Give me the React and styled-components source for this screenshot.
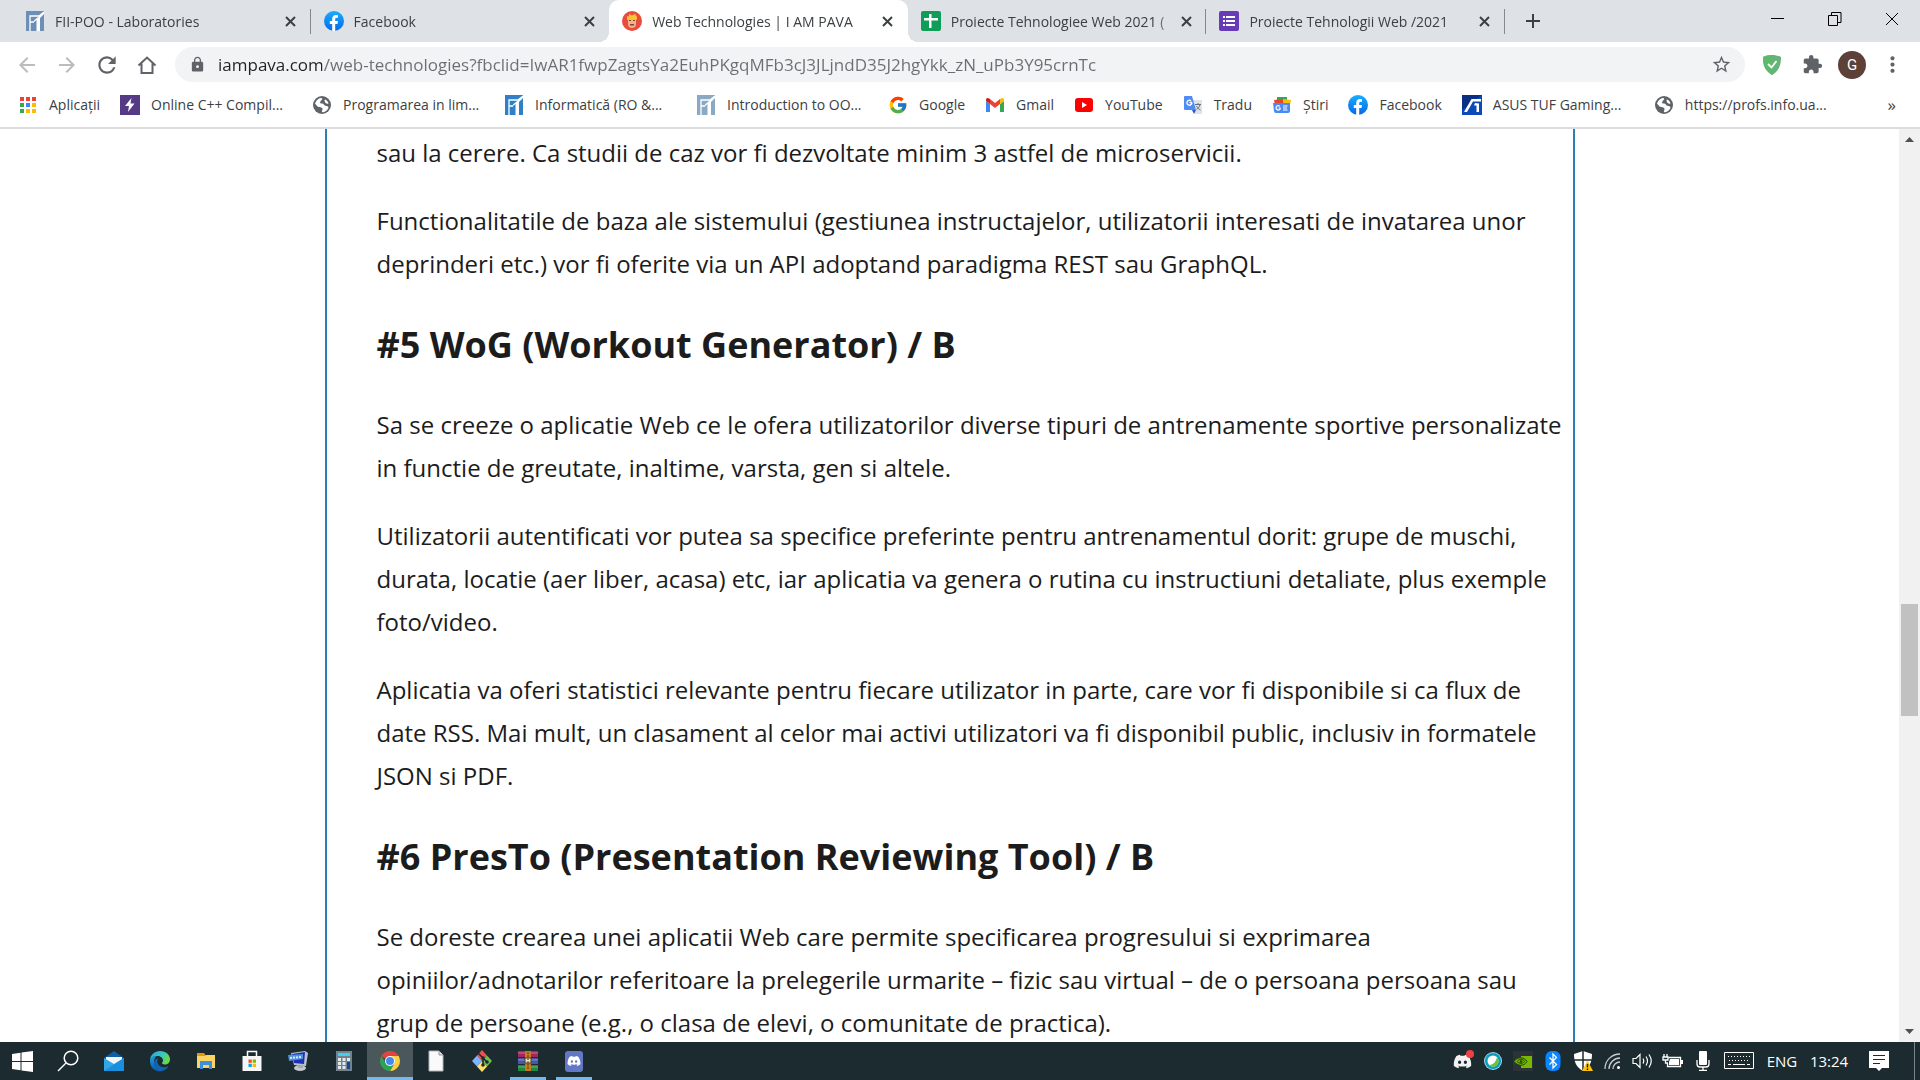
import React from "react";
import styled, { createGlobalStyle } from "styled-components";
import { MdArrowBack, MdArrowForward, MdRefresh, MdLock, MdStarBorder, MdExtension, MdMoreVert, MdAdd } from "react-icons/md";
import { FaDiscord } from "react-icons/fa";
import { FcGoogle } from "react-icons/fc";

const GlobalStyle = createGlobalStyle`
  *, *::before, *::after { box-sizing: border-box; }
  body { margin: 0; background: #fff; font-family: "Open Sans", "Noto Sans", sans-serif; }
  button { border: 0; padding: 0; background: none; font: inherit; color: inherit; }
  a { color: inherit; text-decoration: none; }
  svg { display: block; flex: none; }
`;

/* ---------- layout ---------- */

const Screen = styled.div`
  display: flex;
  flex-direction: column;
  height: 100vh;
  overflow: hidden;
`;

const TabStrip = styled.header`
  display: flex;
  flex: none;
  height: 42px;
  padding-left: 12px;
  background: #dee1e6;
  color: #3c4043;
`;

const Tabs = styled.div`
  display: flex;
  flex: 0 1 1493px;
  min-width: 0;
`;

const TabItem = styled.div`
  position: relative;
  display: flex;
  flex: 1 1 0;
  align-items: center;
  min-width: 0;
  padding: 0 10px 0 13px;
  border-radius: 10px 10px 0 0;
  background: ${(p) => (p.$active ? "#fff" : "transparent")};

  &::before {
    content: "";
    display: ${(p) => (p.$active ? "block" : "none")};
    position: absolute;
    bottom: 0;
    left: -10px;
    right: -10px;
    height: 10px;
    background:
      radial-gradient(circle at 0 0, transparent 10px, #fff 10px) left / 10px 10px no-repeat,
      radial-gradient(circle at 100% 0, transparent 10px, #fff 10px) right / 10px 10px no-repeat;
  }

  &::after {
    content: "";
    position: absolute;
    top: 9px;
    right: 0;
    width: 1px;
    height: 25px;
    background: ${(p) => (p.$divider ? "#85888c" : "transparent")};
  }
`;

const TabButton = styled.button`
  display: flex;
  flex: 1;
  align-items: center;
  gap: 10px;
  min-width: 0;
  height: 40px;
  font-size: 14px;
  text-align: left;
`;

const TabTitle = styled.span`
  flex: 1;
  overflow: hidden;
  white-space: nowrap;
  mask-image: linear-gradient(to left, transparent, #000 20px);
`;

const IconButton = styled.button`
  display: grid;
  place-items: center;
  flex: none;
  width: ${(p) => p.$w || 20}px;
  height: ${(p) => p.$h || 20}px;
  color: ${(p) => p.$color || "#3c4043"};
`;

const WindowControls = styled.div`
  display: flex;
  margin-left: auto;
`;

const Toolbar = styled.div`
  display: flex;
  flex: none;
  align-items: center;
  height: 45px;
  padding: 0 8px 0 7px;
`;

const AddressBar = styled.label`
  display: flex;
  flex: 1;
  align-items: center;
  gap: 12px;
  height: 35px;
  margin: 0 7px 0 8px;
  padding: 0 13px 0 14px;
  border-radius: 18px;
  background: #f1f3f4;
  color: #5f6368;
`;

const AddressInput = styled.input`
  flex: 1;
  min-width: 0;
  padding: 0;
  border: 0;
  outline: 0;
  font: 17px/24px "Open Sans", "Noto Sans", sans-serif;
  background: linear-gradient(to right, #202124 104px, #6a6e73 104px);
  background-clip: text;
  -webkit-text-fill-color: transparent;
`;

const Avatar = styled.span`
  display: grid;
  place-items: center;
  width: 28px;
  height: 28px;
  border-radius: 50%;
  background: #5d4037;
  color: #fff;
  font: 15px Roboto, sans-serif;
`;

const BookmarkBar = styled.nav`
  display: flex;
  flex: none;
  align-items: center;
  height: 42px;
  padding: 0 24px 5px 18px;
  border-bottom: 2px solid #dadce0;
  color: #3c4043;
  font-size: 14px;
`;

const Bookmark = styled.a`
  display: flex;
  flex: 0 0 ${(p) => (p.$wide ? "192px" : "auto")};
  align-items: center;
  gap: 11px;
  padding-right: 20px;
  white-space: nowrap;
`;

const MoreButton = styled.button`
  margin-left: auto;
  font-size: 17px;
  line-height: 20px;
`;

const Viewport = styled.div`
  display: flex;
  flex: 1;
  min-height: 0;
`;

const Main = styled.main`
  display: flex;
  flex: 1;
  justify-content: center;
  overflow: hidden;
`;

const Article = styled.article`
  flex: 0 1 1250px;
  padding: 2px 10px 0 50px;
  border: solid #2980b9;
  border-width: 0 2px;
  color: #1c1c1c;
`;

const Paragraph = styled.p`
  margin: 0 0 25px;
  font-size: 24px;
  line-height: 43px;
`;

const Heading = styled.h2`
  margin: 33px 0 31px;
  font-size: 36px;
  font-weight: 700;
  line-height: 54px;
`;

const ScrollBar = styled.div`
  display: grid;
  flex: none;
  grid-template-rows: 21px 454fr 112px 305fr 21px;
  justify-items: center;
  width: 21px;
  background: #f1f1f1;
`;

const Thumb = styled.div`
  grid-row: 3;
  width: 17px;
  background: #c1c1c1;
`;

const ScrollArrow = styled.button`
  display: grid;
  grid-row: ${(p) => p.$row};
  place-items: center;
  width: 21px;
`;

const Taskbar = styled.footer`
  display: flex;
  flex: none;
  height: 38px;
  background: #1b2b30;
  color: #fff;
`;

const TaskButton = styled.button`
  position: relative;
  display: grid;
  place-items: center;
  width: 46px;
  height: 38px;
  background: ${(p) => (p.$active ? "#4a575b" : "transparent")};

  &:first-child { width: 45px; }

  &::after {
    content: "";
    position: absolute;
    bottom: 0;
    left: ${(p) => (p.$active ? 0 : 5)}px;
    right: ${(p) => (p.$active ? 0 : 5)}px;
    height: 3px;
    background: ${(p) => (p.$open ? "#76b9ed" : "transparent")};
  }
`;

const Tray = styled.div`
  display: flex;
  align-items: center;
  margin-left: auto;
  font-size: 15px;
`;

const TrayButton = styled.button`
  display: grid;
  place-items: center;
  width: ${(p) => p.$w || 30}px;
  height: 38px;
`;

const ShowDesktop = styled.button`
  width: 6px;
  height: 38px;
  margin-left: 10px;
  border-left: 1px solid #7b8588;
`;

/* ---------- icons ---------- */

const Fii = ({ color }) => (
  <svg width="20" height="20" viewBox="0 0 20 20">
    <path d="M1 0h18v20H1z" fill={color} />
    <path d="M5 20V5h9l5-4M5 11h4" fill="none" stroke="#fff" strokeWidth="1.300" />
    <path d="M19 1v2l-4 4v13h-3.500V9L9 11V9.500z" fill="#fff" />
  </svg>
);

const FacebookLogo = () => (
  <svg width="20" height="20" viewBox="0 0 20 20">
    <defs><linearGradient id="fb" x2="0" y2="1"><stop stopColor="#19aefe" /><stop offset="1" stopColor="#0668e7" /></linearGradient></defs>
    <circle cx="10" cy="10" r="10" fill="url(#fb)" />
    <path d="M8.200 20v-7H5.800v-3h2.400V8c0-2.700 1.500-4 3.800-4l2 .2v2.500h-1.300c-1.200 0-1.500.7-1.500 1.500V10H14l-.5 3h-2.300v7z" fill="#fff" />
  </svg>
);

const Pava = () => (
  <svg width="20" height="20" viewBox="0 0 20 20">
    <circle cx="10" cy="10" r="10" fill="#e94b3c" />
    <path d="M6 7h8v6c0 3-2 4-4 4s-4-1-4-4z" fill="#f3b28b" />
    <path d="M5 9V5l2 .5V3l3 1.500L13 3l2 3v3l-2-1H7z" fill="#fbc531" />
    <path d="M7 9h2v1H7zm4 0h2v1h-2zM8 13h4v1.500H8z" fill="#7a4a3a" />
  </svg>
);

const Sheets = () => (
  <svg width="20" height="20" viewBox="0 0 20 20">
    <rect width="20" height="20" rx="2" fill="#0f9d58" />
    <path d="M8 3h2.500v4H17v2.500h-6.500V17H8V9.500H3V7h5z" fill="#fff" />
  </svg>
);

const Forms = () => (
  <svg width="20" height="20" viewBox="0 0 20 20">
    <rect width="20" height="20" rx="2" fill="#673ab7" />
    <path d="M4 5h2v2H4zm3 0h9v2H7zM4 9h2v2H4zm3 0h9v2H7zm-3 4h2v2H4zm3 0h9v2H7z" fill="#fff" />
  </svg>
);

const TabClose = () => (
  <svg width="11" height="11" viewBox="0 0 11 11"><path d="M1 1l9 9M10 1l-9 9" stroke="#3c4043" strokeWidth="2" /></svg>
);

const AppsGrid = () => (
  <svg width="20" height="20" viewBox="0 0 20 20">
    {["#ea4335", "#ea4335", "#ea4335", "#34a853", "#4285f4", "#fbbc04", "#34a853", "#fbbc04", "#fbbc04"].map((c, i) => (
      <rect key={i} x={2 + (i % 3) * 6} y={2 + Math.floor(i / 3) * 6} width="4" height="4" fill={c} />
    ))}
  </svg>
);

const Bolt = () => (
  <svg width="20" height="20" viewBox="0 0 20 20">
    <path d="M0 0h20v20H0z" fill="#553a86" />
    <path d="M11.500 3 5 11h4l-1 6 6.500-8.500H10.500z" fill="#fff" />
  </svg>
);

const Globe = () => (
  <svg width="20" height="20" viewBox="0 0 20 20">
    <circle cx="10" cy="10" r="9" fill="#5f6368" />
    <path d="M3 8.500C4 5 7 3 9.500 3c1.500.5.5 2-.5 2.500s0 1.500-1 2 1 1 2.500 1 1.500 2.500 3.500 2.500 3.500 1 1.500 3.500-4 3-5.500 2.500c-.5-1.500 1.500-2.500 0-4S6 12.500 5 11s-1.500-2-2-2.500z" fill="#fff" />
    <path d="M13 4.500c1.500.5 3 2 3.500 4-1.500.5-3 0-3.500-1.500-.3-1-1-1.500 0-2.500z" fill="#fff" />
  </svg>
);

const Gmail = () => (
  <svg width="20" height="20" viewBox="0 0 20 20">
    <path d="M1 17h4V9L1 6z" fill="#4285f4" />
    <path d="M15 17h4V6l-4 3z" fill="#34a853" />
    <path d="M1 6l4 3V4L3.500 3.200C2 2.500 1 3.500 1 5z" fill="#c5221f" />
    <path d="M5 4l5 4 5-4v5l-5 4-5-4z" fill="#ea4335" />
    <path d="M15 9l4-3V5c0-1.500-1-2.500-2.500-1.800L15 4z" fill="#fbbc04" />
  </svg>
);

const YouTube = () => (
  <svg width="20" height="20" viewBox="0 0 20 20">
    <rect x="1" y="3" width="18" height="14" rx="3" fill="#f00" />
    <path d="M8 7l5 3-5 3z" fill="#fff" />
  </svg>
);

const Translate = () => (
  <svg width="20" height="20" viewBox="0 0 20 20">
    <path d="M8 5h10a1 1 0 0 1 1 1v12a1 1 0 0 1-1 1h-6z" fill="#dfe2e6" />
    <path d="M1 2a1 1 0 0 1 1-1h7l4 14H2a1 1 0 0 1-1-1z" fill="#4f8df5" />
    <path d="M9 15h4l-2 4z" fill="#2a56c6" />
    <path d="M9 7.500H6.500M8.900 7.500A2.500 2.500 0 1 1 8 5.800" fill="none" stroke="#fff" strokeWidth="1.300" />
    <path d="M12 9.500h6M15 8v1.500M17 9.500c-.5 2.500-2 4-3.500 5M13.500 11c1 2 2 3 4 4" fill="none" stroke="#697078" />
  </svg>
);

const News = () => (
  <svg width="20" height="20" viewBox="0 0 20 20">
    <path d="M5 2h10v8H5z" fill="#34a853" />
    <path d="M2 5l9-1 1 6H3z" fill="#ea4335" />
    <path d="M11 4l8 1-1 5h-7z" fill="#fbbc04" />
    <path d="M1 8h17v8a2 2 0 0 1-2 2H4a2 2 0 0 1-2-2z" fill="#4a8af4" />
    <path d="M8.500 13H6.500M8.400 13A2.200 2.200 0 1 1 7.800 11.300M11 11h4.500M11 13h4M11 15h4.500" fill="none" stroke="#fff" strokeWidth="1.200" />
  </svg>
);

const Asus = () => (
  <svg width="20" height="20" viewBox="0 0 20 20">
    <path d="M0 0h20v20H0z" fill="#0b4ab8" /><path d="M0 0h20L0 15z" fill="#0a2f85" />
    <path d="M2 17 9.500 4H19v2.500h-8L5 17z" fill="#fff" /><path d="M13 8l4 .5V17h-2.500v-6.500H12z" fill="#fff" />
  </svg>
);

const Home = () => (
  <svg width="20" height="20" viewBox="0 0 20 20" fill="none" stroke="#5f6368" strokeWidth="2">
    <path d="M1.500 10.500 10 2.500l8.500 8M4.500 8.500v9.500h11V8.500" />
  </svg>
);

const AdGuard = () => (
  <svg width="22" height="22" viewBox="0 0 22 22">
    <path d="M11 1c3 0 7 .8 9 2 0 7-1 13-9 18C3 16 2 10 2 3c2-1.200 6-2 9-2z" fill="#67b279" />
    <path d="M11 1C8 1 4 1.800 2 3c0 7 1 13 9 18z" fill="#5bbb6a" />
    <path d="M7 10l3.500 3.500L15.500 7" fill="none" stroke="#fff" strokeWidth="1.800" />
  </svg>
);

const Minimize = () => <svg width="13" height="13"><path d="M0 6.500h13" stroke="#000" /></svg>;
const Restore = () => (
  <svg width="14" height="14" fill="none" stroke="#000"><path d="M.5 3.500h9v10h-9zM3.500 3V.5h9.500v10H10" /></svg>
);
const CloseWindow = () => <svg width="14" height="14"><path d="M1 1l12 12M13 1 1 13" stroke="#000" /></svg>;

const Windows = () => (
  <svg width="21" height="21" viewBox="0 0 21 21" fill="#fff">
    <path d="M0 3l8.500-1.200V10H0zM9.500 1.600 21 0v10H9.500zM0 11h8.500v8.200L0 18zM9.500 11H21v10L9.500 19.400z" />
  </svg>
);

const Search = () => (
  <svg width="22" height="22" viewBox="0 0 22 22" fill="none" stroke="#fff" strokeWidth="1.500">
    <circle cx="14" cy="8" r="6.800" /><path d="M9 13 1 21" />
  </svg>
);

const Mail = () => (
  <svg width="22" height="22" viewBox="0 0 22 22">
    <path d="M1 8 11 1l10 7v4H1z" fill="#0f5fa8" />
    <path d="M3 7h16v8H3z" fill="#f2f6fa" />
    <path d="M1 8l10 6 10-6v13H1z" fill="#31a7ea" />
    <path d="M1 21 21 8v13z" fill="#1a8fdd" />
  </svg>
);

const Edge = () => (
  <svg width="22" height="22" viewBox="0 0 22 22">
    <defs>
      <linearGradient id="eg" x2="1" y2=".4"><stop stopColor="#2aa5e5" /><stop offset=".6" stopColor="#35c6c0" /><stop offset="1" stopColor="#6bd84c" /></linearGradient>
      <linearGradient id="eb" x2="0" y2="1"><stop stopColor="#1b9de2" /><stop offset="1" stopColor="#0c59a4" /></linearGradient>
    </defs>
    <path d="M1 10C1.500 4.500 6 1 11 1c6 0 10 4 10 8.500 0 3-2.500 5-5 5-2 0-3-1-3-1.500 0-.6 1-1 1-2.500C14 8 11.500 6 8 6c-4 0-6 2.500-7 4z" fill="url(#eg)" />
    <path d="M1 10c1-2.500 4-4 7-4-2 1-3 3-3 6 0 5 4 9 9 9a10 10 0 0 1-3 .5C5 21.500.5 16.500 1 10z" fill="url(#eb)" />
    <path d="M9.500 8.500C8 10 8 12 9 14c1.500 3 6 4.500 10.500 2C18 19.500 14.500 21 12 21c-4 0-7-4-7-8 0-2.500 2-4.500 4.500-4.500z" fill="#1263b1" />
  </svg>
);

const Folder = () => (
  <svg width="20" height="20" viewBox="0 0 20 20">
    <path d="M1 2h7l1.500 2H19v4H1z" fill="#dd9a12" />
    <path d="M1 5h8l1.500-1H19v13H1z" fill="#fcd462" />
    <path d="M4 10h12v8h-3v-4H7v4H4z" fill="#3e8ede" />
  </svg>
);

const Store = () => (
  <svg width="22" height="22" viewBox="0 0 22 22">
    <path d="M6.500 6V1.500h9V6" fill="none" stroke="#fff" strokeWidth="1.500" />
    <path d="M1.500 6h19v15h-19z" fill="#f6f6f6" />
    <path d="M7.500 9.500h3.300v3.300H7.500z" fill="#f25022" /><path d="M11.700 9.500H15v3.300h-3.300z" fill="#7fba00" />
    <path d="M7.500 13.700h3.300V17H7.500z" fill="#00a4ef" /><path d="M11.700 13.700H15V17h-3.300z" fill="#ffb900" />
  </svg>
);

const RemotePc = () => (
  <svg width="22" height="22" viewBox="0 0 22 22">
    <path d="M4 3 18 1l3 2-2 13-12-1z" fill="#b9c1c9" />
    <path d="M5 4l13-2-1 12-10-1z" fill="#1c2fb5" />
    <path d="M1 5l15-1v5L2 11z" fill="#4d8fe0" /><path d="M3 8l11-1" stroke="#dce9ff" strokeWidth="2" strokeDasharray="2 1" />
    <ellipse cx="13" cy="18" rx="6" ry="3" fill="#c3c8cc" /><path d="M11 15h5v3h-5z" fill="#a2a9af" />
  </svg>
);

const Calculator = () => (
  <svg width="18" height="22" viewBox="0 0 18 22">
    <path d="M1 1h16v20H1z" fill="#74828d" /><path d="M3 3h12v3H3z" fill="#41d0f0" />
    <path d="M3 8h3v3H3zm4.500 0h3v3h-3zM12 8h3v3h-3zM3 12h3v3H3zm4.500 0h3v3h-3zM3 16h3v3H3zm4.500 0h3v3h-3z" fill="#e4e9ed" />
    <path d="M12 12h3v7h-3z" fill="#0b4d95" />
  </svg>
);

const Chrome = () => (
  <svg width="20" height="20" viewBox="0 0 20 20">
    <path d="M10 10 1.340 5A10 10 0 0 1 18.660 5z" fill="#e0443a" />
    <path d="M10 10V5h8.660A10 10 0 0 1 10 20l4.300-7.500z" fill="#fdd043" />
    <path d="M10 10l4.300 2.500L10 20A10 10 0 0 1 1.340 5l4.300 7.500z" fill="#2fa355" />
    <circle cx="10" cy="10" r="5" fill="#fff" /><circle cx="10" cy="10" r="4" fill="#4688f1" />
  </svg>
);

const Document = () => (
  <svg width="16" height="22" viewBox="0 0 16 22">
    <path d="M1 1h10l4 4v16H1z" fill="#fafafa" stroke="#b5b5b5" /><path d="M11 1v4h4" fill="#ddd" stroke="#999" />
  </svg>
);

const Git = () => (
  <svg width="22" height="22" viewBox="0 0 22 22">
    <path d="M11 0l5 5.500-5 5.500-5-5.500z" fill="#f0504a" /><path d="M6 5.500l5 5.500-5 5.500L1 11z" fill="#80b3ff" />
    <path d="M16 5.500l5 5.500-5 5.500-5-5.500z" fill="#70c04b" /><path d="M11 11l5 5.500-5 5.500-5-5.500z" fill="#ffe066" />
    <path d="M7 3l5 5v8M12 8l4 4" fill="none" stroke="#1b2b30" strokeWidth="1.600" />
    <circle cx="12" cy="8" r="1.800" fill="#1b2b30" /><circle cx="12" cy="15" r="1.800" fill="#1b2b30" /><circle cx="16" cy="12" r="1.800" fill="#1b2b30" />
  </svg>
);

const WinRar = () => (
  <svg width="22" height="22" viewBox="0 0 22 22">
    <path d="M1 1h20v6H1z" fill="#a9265b" /><path d="M1 8h20v6H1z" fill="#4457a8" /><path d="M1 15h20v6H1z" fill="#1f8a3f" />
    <path d="M1 3h20M1 10h20M1 17h20" stroke="#fff" strokeOpacity=".35" />
    <path d="M8 1h6v20H8z" fill="#c57a22" /><path d="M8 8h6v5H8z" fill="#e9e3d2" stroke="#5a3a10" />
    <path d="M11 2v18" stroke="#5a3a10" strokeDasharray="2 1" />
  </svg>
);

const DiscordTile = styled.span`
  display: grid;
  place-items: center;
  width: 18px;
  height: 21px;
  border-radius: 3px;
  background: #6278c4;
`;

const DiscordTray = () => (
  <svg width="22" height="22" viewBox="0 0 22 22">
    <FaDiscord x="1" y="2" size={19} color="#f2f2f2" /><circle cx="18" cy="4" r="4" fill="#ed4245" />
  </svg>
);

const Webex = () => (
  <svg width="20" height="20" viewBox="0 0 20 20">
    <circle cx="10" cy="10" r="9" fill="#9fd6e0" /><circle cx="10" cy="10" r="8" fill="#0c9dbd" />
    <circle cx="10" cy="10" r="5.500" fill="#fff" /><path d="M14 6a5.500 5.500 0 0 1-8 8c4 0 7-3 8-8z" fill="#70bf44" />
  </svg>
);

const Nvidia = () => (
  <svg width="20" height="20" viewBox="0 0 20 20">
    <path d="M0 0h20v20H0z" fill="#2c3338" /><path d="M8 5h11v12H8z" fill="#76b900" />
    <path d="M1 10.500c3-5 10-5 13 0-3 5-9 5-13 0z" fill="#76b900" stroke="#26420a" />
    <path d="M4 10.500c2-3 6-3 7.500 0-2 2.500-5 2.500-7.500 0z" fill="none" stroke="#26420a" /><circle cx="8" cy="10.500" r="1.300" fill="#26420a" />
  </svg>
);

const Bluetooth = () => (
  <svg width="16" height="20" viewBox="0 0 16 20">
    <rect x=".5" width="15" height="20" rx="6" fill="#0a84ff" />
    <path d="M4.500 6.500l7 7L8 17V3l3.500 3.500-7 7" fill="none" stroke="#fff" strokeWidth="1.300" />
  </svg>
);

const Defender = () => (
  <svg width="20" height="21" viewBox="0 0 20 21">
    <path d="M10 0l9 3c0 8-2 13-9 17C3 16 1 11 1 3z" fill="#fff" />
    <path d="M10 0v20M1 9h18" stroke="#1b2b30" strokeWidth="1.500" />
    <path d="M14.500 9.500 20 20H9z" fill="#ffc20e" /><path d="M14.500 13v3.500m0 1v1.500" stroke="#222" strokeWidth="1.400" />
  </svg>
);

const Wifi = () => (
  <svg width="18" height="18" viewBox="0 0 18 18" fill="none" stroke="#c6cbcd" strokeWidth="1.300">
    <path d="M1 17C1 8 8 2 16 2M5 17c0-6 5-11 11-11M9 17c0-4 3-7 7-7" /><circle cx="14.500" cy="15.500" r="1.500" fill="#fff" stroke="none" />
  </svg>
);

const Volume = () => (
  <svg width="22" height="18" viewBox="0 0 22 18" fill="none" stroke="#fff" strokeWidth="1.200">
    <path d="M1 6.500h3l4-4v13l-4-4H1zM11 6.500q1.500 2.500 0 5M14 4.500q3 4.500 0 9M17 2.500q4.500 6.500 0 13" />
  </svg>
);

const Battery = () => (
  <svg width="22" height="14" viewBox="0 0 22 14">
    <path d="M6.500 3.500h12v9h-13V9" fill="none" stroke="#fff" strokeWidth="1.300" /><path d="M8 5h9v6H7V8z" fill="#fff" /><path d="M19 6h2v4h-2z" fill="#fff" />
    <path d="M2 0v3M5 0v3M1 3h5v3H1zM3.500 6v3H6" stroke="#fff" fill="none" strokeWidth="1.300" />
  </svg>
);

const Microphone = () => (
  <svg width="14" height="20" viewBox="0 0 14 20">
    <rect x="3" width="8" height="14" rx="1" fill="#fff" /><path d="M1 9v4q0 3 3 3h6q3 0 3-3V9M7 16v3.300M3 19.300h8" fill="none" stroke="#fff" strokeWidth="1.300" />
  </svg>
);

const Keyboard = () => (
  <svg width="30" height="18" viewBox="0 0 30 18" fill="none" stroke="#fff">
    <path d="M.5.500h29v16H.5z" /><path d="M4 4.500h22M5 8.500h20" strokeDasharray="1 2" /><path d="M4 12.500h3M9 12.500h12M23 12.500h3" />
  </svg>
);

const Notifications = () => (
  <svg width="20" height="20" viewBox="0 0 20 20">
    <path d="M0 0h20v17h-7l-3 3-3-3H0z" fill="#fff" /><path d="M4 4.500h12M4 8.500h12M4 12.500h7" stroke="#1b2b30" strokeWidth="1.200" />
  </svg>
);

const Arrow = ({ down }) => (
  <svg width="9" height="5" viewBox="0 0 9 5"><path d={down ? "M0 0h9L4.500 5z" : "M0 5h9L4.500 0z"} fill="#505050" /></svg>
);

/* ---------- data ---------- */

const tabs = [
  { title: "FII-POO - Laboratories", icon: <Fii color="#6c8fb7" />, divider: true },
  { title: "Facebook", icon: <FacebookLogo /> },
  { title: "Web Technologies | I AM PAVA", icon: <Pava />, active: true },
  { title: "Proiecte Tehnologiee Web 2021 (", icon: <Sheets />, divider: true },
  { title: "Proiecte Tehnologii Web /2021", icon: <Forms />, divider: true },
];

const bookmarks = [
  { label: "Aplicații", icon: <AppsGrid /> },
  { label: "Online C++ Compil...", icon: <Bolt />, wide: true },
  { label: "Programarea in lim...", icon: <Globe />, wide: true },
  { label: "Informatică (RO &...", icon: <Fii color="#2f80c8" />, wide: true },
  { label: "Introduction to OO...", icon: <Fii color="#8ca9c4" />, wide: true },
  { label: "Google", icon: <FcGoogle size={20} /> },
  { label: "Gmail", icon: <Gmail /> },
  { label: "YouTube", icon: <YouTube /> },
  { label: "Tradu", icon: <Translate /> },
  { label: "Știri", icon: <News /> },
  { label: "Facebook", icon: <FacebookLogo /> },
  { label: "ASUS TUF Gaming...", icon: <Asus />, wide: true },
  { label: "https://profs.info.ua...", icon: <Globe />, wide: true },
];

const tasks = [
  { name: "Start", icon: <Windows /> },
  { name: "Search", icon: <Search /> },
  { name: "Mail", icon: <Mail /> },
  { name: "Edge", icon: <Edge /> },
  { name: "File Explorer", icon: <Folder /> },
  { name: "Store", icon: <Store /> },
  { name: "Remote PC", icon: <RemotePc /> },
  { name: "Calculator", icon: <Calculator /> },
  { name: "Chrome", icon: <Chrome />, active: true, open: true },
  { name: "Document", icon: <Document /> },
  { name: "Git", icon: <Git /> },
  { name: "WinRAR", icon: <WinRar />, open: true },
  { name: "Discord", icon: <DiscordTile><FaDiscord size={14} /></DiscordTile>, open: true },
];

const tray = [
  ["Discord", <DiscordTray />], ["Webex", <Webex />], ["NVIDIA", <Nvidia />], ["Bluetooth", <Bluetooth />],
  ["Security", <Defender />], ["Network", <Wifi />], ["Volume", <Volume />], ["Battery", <Battery />], ["Microphone", <Microphone />],
];

export default function App() {
  return (
    <Screen>
      <GlobalStyle />
      <TabStrip>
        <Tabs>
          {tabs.map((t) => (
            <TabItem key={t.title} $active={t.active} $divider={t.divider}>
              <TabButton>
                {t.icon}
                <TabTitle>{t.title}</TabTitle>
              </TabButton>
              <IconButton aria-label="Close tab"><TabClose /></IconButton>
            </TabItem>
          ))}
        </Tabs>
        <IconButton $w={55} $h={41} aria-label="New tab"><MdAdd size={24} /></IconButton>
        <WindowControls>
          <IconButton $w={57} $h={37} aria-label="Minimize"><Minimize /></IconButton>
          <IconButton $w={57} $h={37} aria-label="Restore"><Restore /></IconButton>
          <IconButton $w={57} $h={37} aria-label="Close"><CloseWindow /></IconButton>
        </WindowControls>
      </TabStrip>

      <Toolbar>
        <IconButton $w={40} $h={40} $color="#babcbe" aria-label="Back"><MdArrowBack size={24} /></IconButton>
        <IconButton $w={40} $h={40} $color="#babcbe" aria-label="Forward"><MdArrowForward size={24} /></IconButton>
        <IconButton $w={40} $h={40} $color="#5f6368" aria-label="Reload"><MdRefresh size={26} /></IconButton>
        <IconButton $w={40} $h={40} aria-label="Home"><Home /></IconButton>
        <AddressBar>
          <MdLock size={17} />
          <AddressInput
            aria-label="Address"
            spellCheck={false}
            defaultValue="iampava.com/web-technologies?fbclid=IwAR1fwpZagtsYa2EuhPKgqMFb3cJ3JLjndD35J2hgYkk_zN_uPb3Y95crnTc"
          />
          <MdStarBorder size={21} />
        </AddressBar>
        <IconButton $w={40} $h={40} aria-label="AdGuard"><AdGuard /></IconButton>
        <IconButton $w={40} $h={40} $color="#5f6368" aria-label="Extensions"><MdExtension size={21} /></IconButton>
        <IconButton $w={40} $h={40} aria-label="Profile"><Avatar>G</Avatar></IconButton>
        <IconButton $w={40} $h={40} $color="#5f6368" aria-label="Menu"><MdMoreVert size={25} /></IconButton>
      </Toolbar>

      <BookmarkBar>
        {bookmarks.map((b) => (
          <Bookmark key={b.label} href="#" $wide={b.wide}>
            {b.icon}
            {b.label}
          </Bookmark>
        ))}
        <MoreButton aria-label="More bookmarks">»</MoreButton>
      </BookmarkBar>

      <Viewport>
        <Main>
          <Article>
            <Paragraph>sau la cerere. Ca studii de caz vor fi dezvoltate minim 3 astfel de microservicii.</Paragraph>
            <Paragraph>
              Functionalitatile de baza ale sistemului (gestiunea instructajelor, utilizatorii interesati de invatarea unor
              deprinderi etc.) vor fi oferite via un API adoptand paradigma REST sau GraphQL.
            </Paragraph>
            <Heading>#5 WoG (Workout Generator) / B</Heading>
            <Paragraph>
              Sa se creeze o aplicatie Web ce le ofera utilizatorilor diverse tipuri de antrenamente sportive personalizate
              in functie de greutate, inaltime, varsta, gen si altele.
            </Paragraph>
            <Paragraph>
              Utilizatorii autentificati vor putea sa specifice preferinte pentru antrenamentul dorit: grupe de muschi,
              durata, locatie (aer liber, acasa) etc, iar aplicatia va genera o rutina cu instructiuni detaliate, plus
              exemple foto/video.
            </Paragraph>
            <Paragraph>
              Aplicatia va oferi statistici relevante pentru fiecare utilizator in parte, care vor fi disponibile si ca flux de
              date RSS. Mai mult, un clasament al celor mai activi utilizatori va fi disponibil public, inclusiv in formatele
              JSON si PDF.
            </Paragraph>
            <Heading>#6 PresTo (Presentation Reviewing Tool) / B</Heading>
            <Paragraph>
              Se doreste crearea unei aplicatii Web care permite specificarea progresului si exprimarea
              opiniilor/adnotarilor referitoare la prelegerile urmarite – fizic sau virtual – de o persoana persoana sau
              grup de persoane (e.g., o clasa de elevi, o comunitate de practica).
            </Paragraph>
          </Article>
        </Main>
        <ScrollBar>
          <ScrollArrow $row={1} aria-label="Scroll up"><Arrow /></ScrollArrow>
          <Thumb />
          <ScrollArrow $row={5} aria-label="Scroll down"><Arrow down /></ScrollArrow>
        </ScrollBar>
      </Viewport>

      <Taskbar>
        {tasks.map((t) => (
          <TaskButton key={t.name} aria-label={t.name} $active={t.active} $open={t.open}>{t.icon}</TaskButton>
        ))}
        <Tray>
          {tray.map(([name, icon]) => (
            <TrayButton key={name} aria-label={name}>{icon}</TrayButton>
          ))}
          <TrayButton $w={42} aria-label="Keyboard"><Keyboard /></TrayButton>
          <TrayButton $w={44}>ENG</TrayButton>
          <TrayButton $w={50}>13:24</TrayButton>
          <TrayButton $w={50} aria-label="Notifications"><Notifications /></TrayButton>
          <ShowDesktop aria-label="Show desktop" />
        </Tray>
      </Taskbar>
    </Screen>
  );
}
